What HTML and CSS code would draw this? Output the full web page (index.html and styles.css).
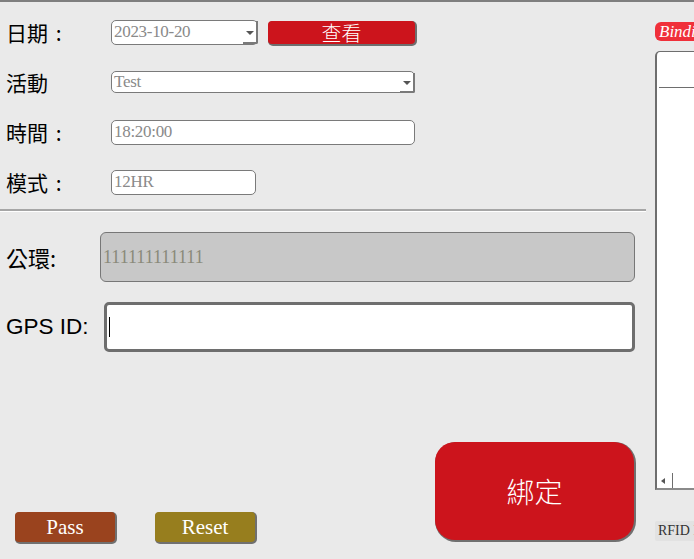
FILE: index.html
```html
<!DOCTYPE html>
<html>
<head>
<meta charset="utf-8">
<link rel="stylesheet" href="styles.css">
</head>
<body>
<div class="app">
  <div class="main">
    <div class="rows">
      <div class="row">
        <span class="label">日期 <span class="colon">:</span></span>
        <div class="select w-date"><span class="val">2023-10-20</span><span class="arrow"></span></div>
        <button class="btn-view">查看</button>
      </div>
      <div class="row">
        <span class="label">活動</span>
        <div class="select w-act"><span class="val">Test</span><span class="arrow"></span></div>
      </div>
      <div class="row">
        <span class="label">時間 <span class="colon">:</span></span>
        <div class="field w-time">18:20:00</div>
      </div>
      <div class="row">
        <span class="label">模式 <span class="colon">:</span></span>
        <div class="field w-mode">12HR</div>
      </div>
    </div>
    <div class="sep"></div>
    <div class="big-row first">
      <span class="big-label cjk w93">公環:</span>
      <div class="big-input disabled">111111111111</div>
    </div>
    <div class="big-row second">
      <span class="big-label w97">GPS ID:</span>
      <div class="big-input active"><span class="caret"></span></div>
    </div>
    <div class="bottom">
      <div class="small-btns">
        <button class="sbtn pass">Pass</button>
        <button class="sbtn reset">Reset</button>
      </div>
      <button class="bind">綁定</button>
    </div>
  </div>
  <div class="side">
    <div class="badge">Binding</div>
    <div class="list">
      <div class="list-head"></div>
      <div class="list-body"></div>
      <div class="hscroll"><span class="larrow"></span><span class="thumb"></span></div>
    </div>
    <div class="rfid">RFID List</div>
  </div>
</div>
</body>
</html>
```

FILE: styles.css
```css
* { box-sizing: border-box; }
html, body { margin: 0; padding: 0; }
body {
  width: 694px;
  height: 559px;
  overflow: hidden;
  background: #eaeaea;
  border-top: 2px solid #7f7f7f;
}
.app {
  display: flex;
  height: 557px;
}
.main {
  width: 646px;
  flex: none;
  display: flex;
  flex-direction: column;
}
.rows {
  padding-top: 5px;
  display: flex;
  flex-direction: column;
}
.row {
  height: 50px;
  display: flex;
  align-items: center;
  padding-left: 6px;
}
.label {
  width: 105px;
  font-family: "Noto Sans CJK TC", "Noto Sans", sans-serif;
  font-size: 21px;
  color: #000;
  line-height: 1;
  white-space: pre;
}
.colon { margin-left: 3px; }
.select, .field {
  height: 25px;
  background: #fff;
  border: 1px solid #7a7a7a;
  border-radius: 5px;
  font-family: "Liberation Serif", serif;
  font-size: 17px;
  color: #8a8a8a;
  display: flex;
  align-items: center;
  padding-left: 2px;
  position: relative;
  letter-spacing: -0.3px;
}
.w-date { width: 147px; }
.w-act { width: 304px; height: 22px; }
.w-time { width: 304px; }
.w-mode { width: 145px; }
.select .val { flex: 1; }
.arrow {
  width: 15px;
  height: 100%;
  border-right: 2px solid #7a7a7a;
  border-bottom: 2px solid #7a7a7a;
  border-bottom-right-radius: 2px;
  margin-right: -1px;
  margin-bottom: -1px;
  position: relative;
}
.arrow::after {
  content: "";
  position: absolute;
  left: 3px;
  top: 50%;
  margin-top: -1px;
  border-left: 4px solid transparent;
  border-right: 4px solid transparent;
  border-top: 4px solid #555;
}
.btn-view {
  margin-left: 10px;
  width: 147px;
  height: 23px;
  background: #cc141c;
  border: none;
  border-radius: 4px;
  box-shadow: 1px 1px 0 1px #6e6e6e;
  color: #fff;
  font-family: "Noto Sans CJK TC", serif;
  font-weight: 300;
  font-size: 20px;
  line-height: 23px;
  padding: 0;
}
.sep {
  margin-top: 2px;
  height: 3px;
  border-top: 2px solid #a6a6a6;
  border-bottom: 1px solid #ffffff;
}
.big-row {
  display: flex;
  align-items: center;
  padding-left: 6px;
  height: 50px;
}
.big-row.first { margin-top: 20px; }
.big-row.second { margin-top: 20px; }
.big-label {
  font-family: "Liberation Sans", "Noto Sans CJK TC", sans-serif;
  font-size: 22.5px;
  color: #000;
  flex: none;
}
.big-label.cjk { font-family: "Noto Sans CJK TC", sans-serif; font-size: 22px; }
.w93 { width: 94px; }
.w97 { width: 98px; }
.big-input {
  flex: none;
  height: 50px;
  border-radius: 6px;
  display: flex;
  align-items: center;
}
.big-input.disabled {
  width: 535px;
  background: #c8c8c8;
  border: 1px solid #777;
  font-family: "Liberation Serif", serif;
  font-size: 18px;
  color: #8a8a7a;
  padding-left: 2px;
  letter-spacing: 0;
}
.big-input.active {
  width: 531px;
  background: #fff;
  border: 3px solid #6e6e6e;
  border-radius: 5px;
  padding-left: 2px;
}
.caret {
  display: block;
  width: 1px;
  height: 20px;
  background: #000;
}
.bottom {
  margin-top: 90px;
  height: 100px;
  display: flex;
  justify-content: space-between;
  padding-left: 15px;
  padding-right: 12px;
}
.small-btns {
  display: flex;
  align-items: flex-end;
  gap: 40px;
}
.sbtn {
  width: 100px;
  height: 30px;
  border: none;
  border-radius: 4px;
  box-shadow: 1px 1px 0 1px #707070;
  color: #fff;
  font-family: "Liberation Serif", serif;
  font-size: 21px;
  padding: 0;
  line-height: 28px;
}
.pass { background: #9a431e; }
.reset { background: #977e1e; }
.bind {
  align-self: flex-start;
  width: 199px;
  height: 98px;
  background: #cc141c;
  border: none;
  border-radius: 20px;
  box-shadow: 1px 1px 0 1px #707070;
  color: #fff;
  font-family: "Noto Sans CJK TC", sans-serif;
  font-weight: 300;
  font-size: 28px;
  padding: 0;
}
.side {
  flex: 1;
  padding-left: 9px;
  display: flex;
  flex-direction: column;
  overflow: hidden;
}
.badge {
  margin-top: 20px;
  height: 19px;
  width: 60px;
  background: #f0303a;
  border-radius: 6px 0 0 6px;
  color: #fff;
  font-family: "Liberation Serif", serif;
  font-style: italic;
  font-size: 17px;
  line-height: 19px;
  padding-left: 4px;
  white-space: nowrap;
  overflow: hidden;
}
.list {
  margin-top: 10px;
  height: 439px;
  width: 60px;
  background: #fff;
  border-left: 2px solid #6e6e6e;
  border-top: 1px solid #6e6e6e;
  border-bottom: 2px solid #8a8a8a;
  border-top-left-radius: 5px;
  display: flex;
  flex-direction: column;
}
.list-head {
  height: 36px;
  margin-left: 2px;
  border-bottom: 1px solid #6e6e6e;
}
.list-body { flex: 1; }
.hscroll {
  height: 15px;
  display: flex;
  align-items: center;
  position: relative;
}
.larrow {
  margin-left: 4px;
  border-top: 3px solid transparent;
  border-bottom: 3px solid transparent;
  border-right: 4px solid #555;
}
.thumb {
  margin-left: 7px;
  width: 1px;
  height: 15px;
  background: #6e6e6e;
}
.rfid {
  margin-top: 31px;
  height: 20px;
  width: 60px;
  background: #e2e2e2;
  border-radius: 2px;
  font-family: "Liberation Serif", serif;
  font-size: 14px;
  line-height: 20px;
  color: #333;
  padding-left: 3px;
  white-space: nowrap;
  overflow: hidden;
}
```
